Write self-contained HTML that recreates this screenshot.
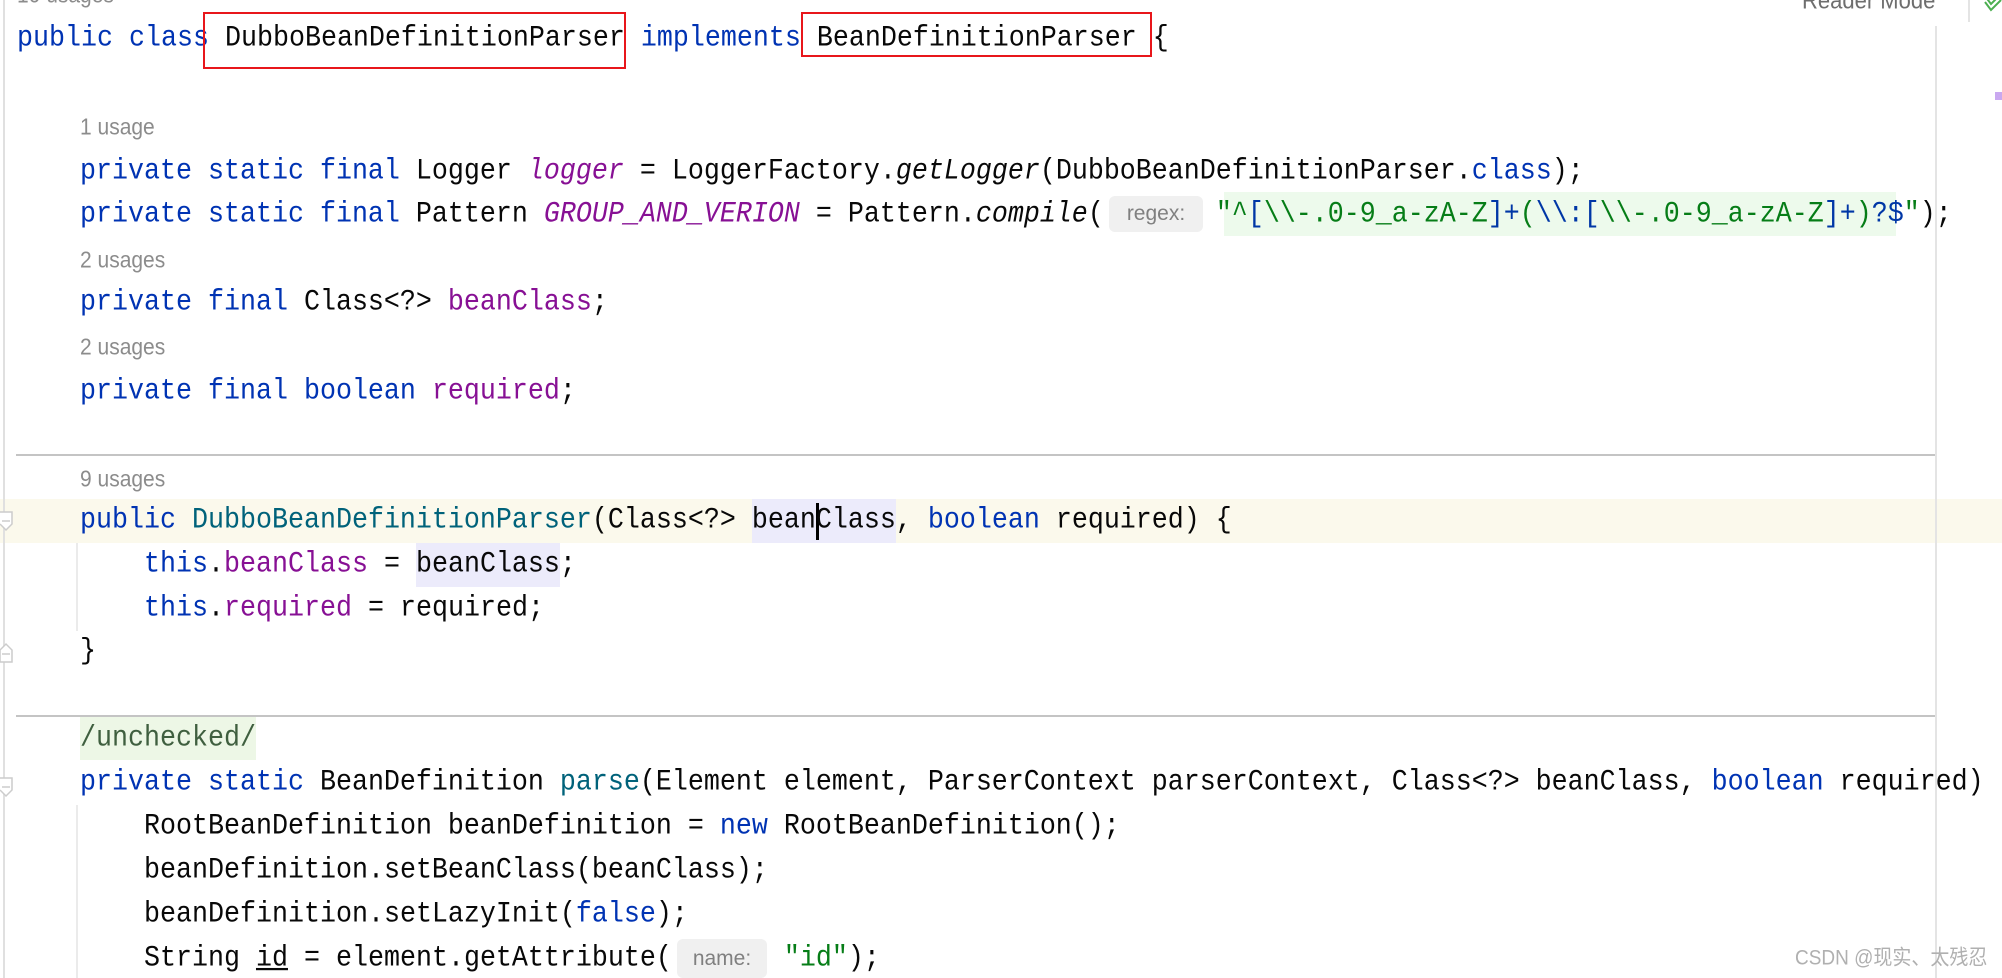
<!DOCTYPE html>
<html><head><meta charset="utf-8"><style>
html,body{margin:0;padding:0;background:#fff;width:2002px;height:978px;overflow:hidden;position:relative}
.l{position:absolute;height:44px;line-height:44px;font-family:"Liberation Mono",monospace;font-size:26.67px;color:#080808;white-space:pre;transform:scaleY(1.12);transform-origin:0 50%}
.u{position:absolute;height:30px;line-height:30px;font-family:"Liberation Sans",sans-serif;font-size:21px;color:#8c8c8c;white-space:pre;transform:scaleY(1.1);transform-origin:0 50%}
.k{color:#0033b3}.f{color:#871094}.m{color:#00627a}.s{color:#067d17}.e{color:#0037a6}.i{font-style:italic}
.abs{position:absolute}
.chip{position:absolute;background:#f0f0f0;border-radius:6px;font-family:"Liberation Sans",sans-serif;font-size:21px;color:#808080;text-align:center}
</style></head><body>
<div class="abs" style="left:0;top:499px;width:2002px;height:44px;background:#fbf9ec"></div>
<div class="abs" style="left:752px;top:499px;width:144px;height:44px;background:#ecebfb"></div>
<div class="abs" style="left:816px;top:503px;width:3px;height:37px;background:#000"></div>
<div class="abs" style="left:416px;top:543px;width:144px;height:44px;background:#ecebfb"></div>
<div class="abs" style="left:80px;top:717px;width:176px;height:43px;background:#edf7e6"></div>
<div class="abs" style="left:1224px;top:192px;width:672px;height:44px;background:#edfaec"></div>
<div class="chip" style="left:1109px;top:196px;width:94px;height:36px;line-height:36px">regex:</div>
<div class="chip" style="left:677px;top:939px;width:90px;height:39px;line-height:39px">name:</div>
<div class="abs" style="left:3px;top:0;width:2px;height:978px;background:#e0e0e0"></div>
<svg class="abs" style="left:0;top:510px" width="14" height="24"><path d="M0 2H12V14L6 20L0 14" fill="#fff" stroke="#ccc" stroke-width="1.5"/><path d="M2 11H10" stroke="#ccc" stroke-width="1.5"/></svg>
<svg class="abs" style="left:0;top:640px" width="14" height="24"><path d="M0 22H12V10L6 4L0 10Z" fill="#fff" stroke="#ccc" stroke-width="1.5"/><path d="M2 14H10" stroke="#ccc" stroke-width="1.5"/></svg>
<svg class="abs" style="left:0;top:776px" width="14" height="24"><path d="M0 2H12V14L6 20L0 14" fill="#fff" stroke="#ccc" stroke-width="1.5"/><path d="M2 11H10" stroke="#ccc" stroke-width="1.5"/></svg>
<div class="abs" style="left:76px;top:543px;width:2px;height:88px;background:#ebebeb"></div>
<div class="abs" style="left:76px;top:805px;width:2px;height:173px;background:#ebebeb"></div>
<div class="abs" style="left:16px;top:454px;width:1920px;height:2px;background:#c4c4c4"></div>
<div class="abs" style="left:16px;top:715px;width:1920px;height:2px;background:#c4c4c4"></div>
<div class="abs" style="left:1935px;top:26px;width:2px;height:952px;background:#e4e4e4"></div>
<div class="abs" style="left:1968px;top:0;width:2px;height:22px;background:#e4e4e4"></div>
<div class="abs" style="left:1995px;top:92px;width:7px;height:8px;background:#c9a8f0"></div>
<svg class="abs" style="left:1984px;top:0" width="18" height="16"><path d="M1 2L7 10L17 0M1 -4L7 4L17 -6" fill="none" stroke="#4caf50" stroke-width="2"/></svg>
<div class="u" style="left:1802px;top:-14px;font-size:22px;color:#6e6e6e">Reader Mode</div>
<div class="u" style="left:17px;top:-19px">10 usages</div>
<div class="l" style="left:17px;top:17px"><span class="k">public class</span> DubboBeanDefinitionParser <span class="k">implements</span> BeanDefinitionParser {</div>
<div class="abs" style="left:203px;top:12px;width:419px;height:53px;border:2.5px solid #e8161b"></div>
<div class="abs" style="left:801px;top:12px;width:347px;height:41px;border:2.5px solid #e8161b"></div>
<div class="u" style="left:80px;top:113px">1 usage</div>
<div class="l" style="left:80px;top:150px"><span class="k">private static final</span> Logger <span class="f i">logger</span> = LoggerFactory.<span class="i">getLogger</span>(DubboBeanDefinitionParser.<span class="k">class</span>);</div>
<div class="l" style="left:80px;top:193px"><span class="k">private static final</span> Pattern <span class="f i">GROUP_AND_VERION</span> = Pattern.<span class="i">compile</span>(<span style="display:inline-block;width:112px"></span><span class="s">"^</span><span class="e">[</span><span class="s">\\-.0-9_a-zA-Z</span><span class="e">]+</span><span class="s">(</span><span class="e">\\:[</span><span class="s">\\-.0-9_a-zA-Z</span><span class="e">]+</span><span class="s">)</span><span class="e">?$</span><span class="s">"</span>);</div>
<div class="u" style="left:80px;top:246px">2 usages</div>
<div class="l" style="left:80px;top:281px"><span class="k">private final</span> Class&lt;?&gt; <span class="f">beanClass</span>;</div>
<div class="u" style="left:80px;top:333px">2 usages</div>
<div class="l" style="left:80px;top:370px"><span class="k">private final boolean</span> <span class="f">required</span>;</div>
<div class="u" style="left:80px;top:465px">9 usages</div>
<div class="l" style="left:80px;top:499px"><span class="k">public</span> <span class="m">DubboBeanDefinitionParser</span>(Class&lt;?&gt; beanClass, <span class="k">boolean</span> required) {</div>
<div class="l" style="left:144px;top:543px"><span class="k">this</span>.<span class="f">beanClass</span> = beanClass;</div>
<div class="l" style="left:144px;top:587px"><span class="k">this</span>.<span class="f">required</span> = required;</div>
<div class="l" style="left:80px;top:630px">}</div>
<div class="l" style="left:80px;top:717px;color:#3f5f3f">/unchecked/</div>
<div class="l" style="left:80px;top:761px"><span class="k">private static</span> BeanDefinition <span class="m">parse</span>(Element element, ParserContext parserContext, Class&lt;?&gt; beanClass, <span class="k">boolean</span> required)</div>
<div class="l" style="left:144px;top:805px">RootBeanDefinition beanDefinition = <span class="k">new</span> RootBeanDefinition();</div>
<div class="l" style="left:144px;top:849px">beanDefinition.setBeanClass(beanClass);</div>
<div class="l" style="left:144px;top:893px">beanDefinition.setLazyInit(<span class="k">false</span>);</div>
<div class="l" style="left:144px;top:937px">String <u>id</u> = element.getAttribute(<span style="display:inline-block;width:112px"></span><span class="s">"id"</span>);</div>
<div class="u" style="left:1795px;top:944px;font-size:19px;color:#b0b0b0;font-family:'Liberation Sans','Noto Sans CJK SC',sans-serif">CSDN @现实、太残忍</div>
</body></html>
